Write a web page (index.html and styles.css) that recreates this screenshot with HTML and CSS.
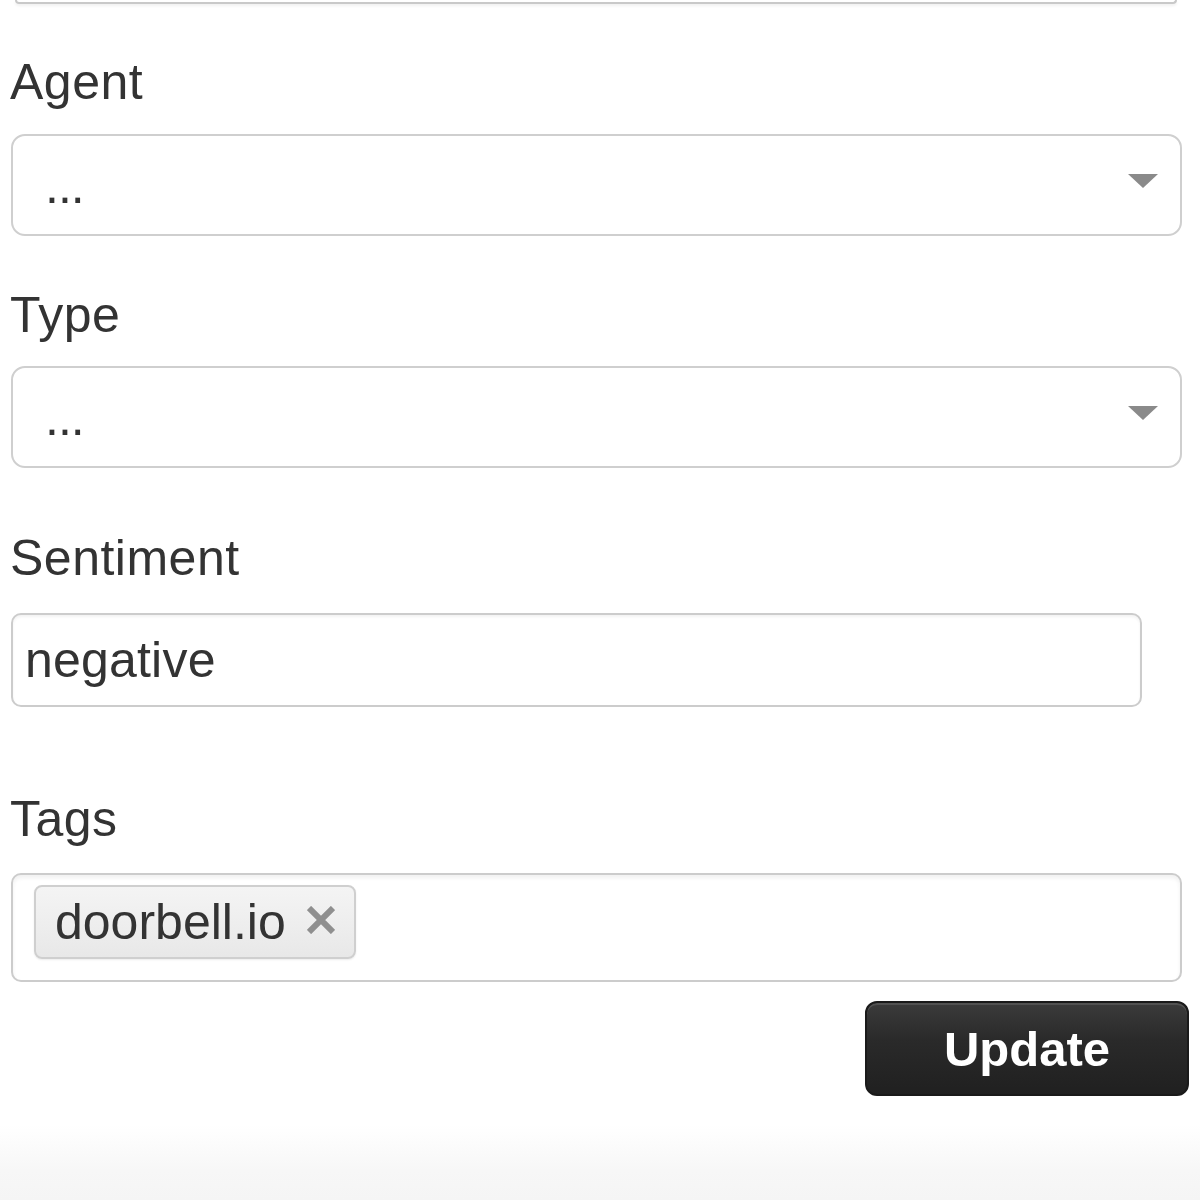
FILE: index.html
```html
<!DOCTYPE html>
<html>
<head>
<meta charset="utf-8">
<link rel="stylesheet" href="styles.css">
</head>
<body>
<div class="page">
  <form class="form">
    <div class="stub"></div>

    <div class="label label-agent">Agent</div>
    <div class="select">
      <span class="select-value">...</span>
      <svg class="caret" width="30" height="14" viewBox="0 0 30 14"><polygon points="0,0 30,0 15,14" fill="#8a8a8a"/></svg>
    </div>

    <div class="label label-type">Type</div>
    <div class="select select-type">
      <span class="select-value">...</span>
      <svg class="caret" width="30" height="14" viewBox="0 0 30 14"><polygon points="0,0 30,0 15,14" fill="#8a8a8a"/></svg>
    </div>

    <div class="label label-sentiment">Sentiment</div>
    <div class="input">negative</div>

    <div class="label label-tags">Tags</div>
    <div class="tags">
      <span class="tag">doorbell.io
        <svg class="tag-x" width="28" height="28" viewBox="0 0 28 28"><path d="M2 2 L26 26 M26 2 L2 26" stroke="#8f8f8f" stroke-width="6" stroke-linecap="butt"/></svg>
      </span>
    </div>

    <div class="actions">
      <button type="button" class="btn">Update</button>
    </div>
  </form>
  <div class="footer"></div>
</div>
</body>
</html>
```

FILE: styles.css
```css
html, body {
  margin: 0;
  padding: 0;
  background: #ffffff;
}

body {
  font-family: "Liberation Sans", Arial, Helvetica, sans-serif;
  color: #333333;
}

.page {
  width: 1200px;
  min-height: 1200px;
  display: flex;
  flex-direction: column;
}

.form {
  margin: 0 0 0 11px;
  width: 1171px;
  display: flex;
  flex-direction: column;
}

.stub {
  margin: 0 5px 0 4px;
  height: 2px;
  border: 2px solid #c9c9c9;
  border-top: none;
  border-radius: 0 0 12px 12px;
  box-shadow: 0 2px 3px rgba(0, 0, 0, 0.06);
}

.label {
  font-size: 50px;
  line-height: 56px;
  color: #333333;
  margin-left: -1px;
  letter-spacing: 0.5px;
}

.label-agent { margin-top: 50px; }
.label-type { margin-top: 51px; }
.label-sentiment { margin-top: 62px; }
.label-tags { margin-top: 84px; }

.select {
  margin-top: 24px;
  height: 102px;
  box-sizing: border-box;
  border: 2px solid #cfcfcf;
  border-radius: 14px;
  background: #ffffff;
  display: flex;
  align-items: center;
  justify-content: space-between;
  padding: 0 22px 0 32px;
}

.select-type { margin-top: 23px; }

.select-value {
  font-size: 50px;
  line-height: 56px;
  color: #333333;
  position: relative;
  top: 1px;
  letter-spacing: -1px;
}

.caret {
  display: block;
  margin-top: -8px;
}

.input {
  margin-top: 27px;
  width: 1131px;
  height: 94px;
  box-sizing: border-box;
  border: 2px solid #cccccc;
  border-radius: 10px;
  padding: 0 12px;
  display: flex;
  align-items: center;
  font-size: 50px;
  line-height: 56px;
  color: #333333;
  background: #ffffff;
  box-shadow: inset 0 2px 3px rgba(0, 0, 0, 0.05);
  letter-spacing: 0.2px;
}

.tags {
  margin-top: 26px;
  height: 109px;
  box-sizing: border-box;
  border: 2px solid #cccccc;
  border-radius: 10px;
  padding: 10px 21px;
  display: flex;
  align-items: flex-start;
  background: #ffffff;
  box-shadow: inset 0 3px 4px rgba(0, 0, 0, 0.06);
}

.tag {
  height: 74px;
  box-sizing: border-box;
  border: 2px solid #cfcfcf;
  border-radius: 8px;
  background: linear-gradient(#f4f4f4, #e8e8e8);
  box-shadow: 0 1px 2px rgba(0, 0, 0, 0.08);
  padding: 0 19px 0 19px;
  display: flex;
  align-items: center;
  gap: 21px;
  font-size: 50px;
  line-height: 56px;
  color: #333333;
}

.tag-x {
  display: block;
  margin-top: -4px;
}

.actions {
  margin-top: 19px;
  margin-right: -7px;
  display: flex;
  justify-content: flex-end;
}

.btn {
  width: 324px;
  height: 95px;
  box-sizing: border-box;
  border: 2px solid #1a1a1a;
  border-radius: 12px;
  background: linear-gradient(#3b3b3b, #2a2a2a 40%, #202020);
  box-shadow: inset 0 2px 0 rgba(255, 255, 255, 0.12);
  color: #ffffff;
  font-family: "Liberation Sans", Arial, Helvetica, sans-serif;
  font-weight: 700;
  font-size: 49px;
  line-height: 56px;
  padding: 0;
  cursor: pointer;
}

.footer {
  margin-top: auto;
  height: 75px;
  background: linear-gradient(#ffffff, #f7f7f7 60%, #f5f5f5);
}
```
